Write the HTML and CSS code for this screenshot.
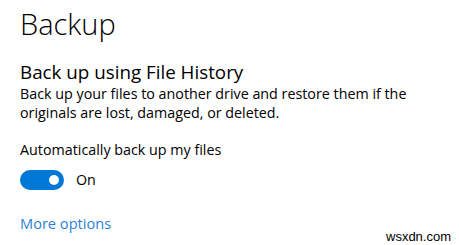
FILE: index.html
```html
<!DOCTYPE html>
<html>
<head>
<meta charset="utf-8">
<link rel="stylesheet" href="styles.css">
</head>
<body>
<div class="page">
  <h1 class="title">Backup</h1>
  <h2 class="subtitle">Back up using File History</h2>
  <p class="desc">Back up your files to another drive and restore them if the originals are lost, damaged, or deleted.</p>
  <div class="setting-label">Automatically back up my files</div>
  <div class="toggle-row">
    <span class="toggle"><span class="knob"></span></span>
    <span class="toggle-text">On</span>
  </div>
  <a class="link" href="#">More options</a>
</div>
<div class="watermark">wsxdn.com</div>
</body>
</html>
```
FILE: styles.css
```css
html, body {
  margin: 0;
  padding: 0;
  background: #ffffff;
}
body {
  width: 459px;
  height: 245px;
  overflow: hidden;
  position: relative;
  font-family: "Open Sans", "Noto Sans", sans-serif;
  color: #000000;
}
.page {
  padding: 4px 0 0 20px;
  display: flex;
  flex-direction: column;
  align-items: flex-start;
}
.title {
  margin: 0;
  font-size: 29px;
  font-weight: 300;
  line-height: 40px;
}
.subtitle {
  margin: 16px 0 0 0;
  font-size: 18.8px;
  font-weight: 400;
  line-height: 24px;
}
.desc {
  margin: 0;
  font-size: 14.3px;
  line-height: 19px;
  width: 425px;
}
.setting-label {
  margin-top: 18px;
  font-size: 14.3px;
  line-height: 20px;
}
.toggle-row {
  margin-top: 10px;
  display: flex;
  align-items: center;
  gap: 12px;
}
.toggle {
  width: 44px;
  height: 20px;
  border-radius: 10px;
  background: #0078d7;
  display: flex;
  align-items: center;
  justify-content: flex-end;
  padding-right: 5px;
  box-sizing: border-box;
}
.knob {
  width: 10px;
  height: 10px;
  border-radius: 50%;
  background: #ffffff;
}
.toggle-text {
  font-size: 14.3px;
  line-height: 20px;
}
.link {
  margin-top: 23px;
  font-size: 14.6px;
  line-height: 20px;
  color: #2b82d6;
  text-decoration: none;
}
.watermark {
  position: absolute;
  left: 386px;
  top: 229px;
  font-family: "Liberation Sans", Arial, sans-serif;
  font-size: 13px;
  line-height: 15px;
  color: #000;
}
```
